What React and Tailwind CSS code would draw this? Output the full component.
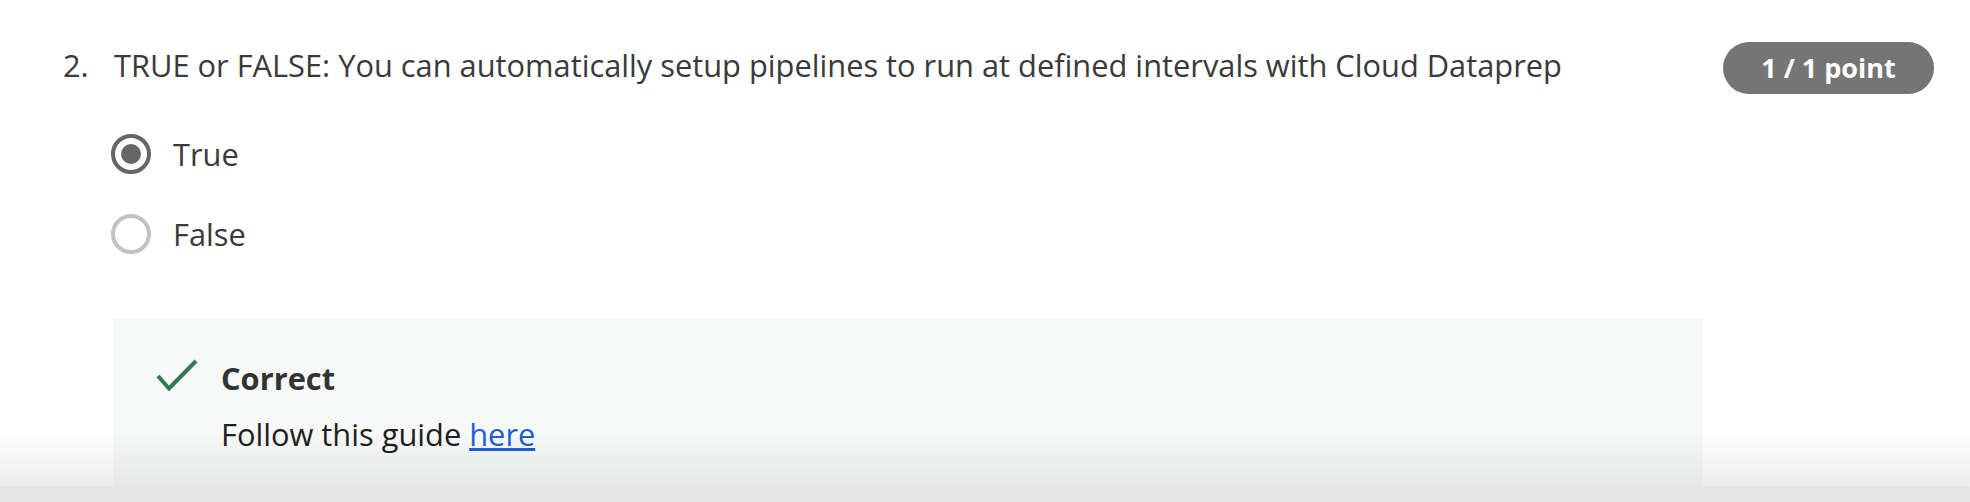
const font = { fontFamily: '"Open Sans", "Noto Sans", sans-serif' };

function Radio({ checked, label }) {
  return (
    <div className="flex items-center h-[40px] gap-[22px]">
      {checked ? (
        <span className="w-[40px] h-[40px] rounded-full border-[4px] border-[#666666] flex items-center justify-center">
          <span className="w-[20px] h-[20px] rounded-full bg-[#666666]" />
        </span>
      ) : (
        <span className="w-[40px] h-[40px] rounded-full border-[4px] border-[#c2c2c2]" />
      )}
      <span className="text-[30.8px] leading-[40px] text-[#3a3a3a]">{label}</span>
    </div>
  );
}

export default function App() {
  return (
    <div className="relative w-full h-[502px] bg-white overflow-hidden" style={font}>
      {/* question row */}
      <div className="flex items-start justify-between pt-[42px] pl-[63px] pr-[36px]">
        <div className="flex pt-[3px] text-[30.8px] leading-[40px] text-[#3a3a3a]">
          <span className="w-[51px] shrink-0">2.</span>
          <span>TRUE or FALSE: You can automatically setup pipelines to run at defined intervals with Cloud Dataprep</span>
        </div>
        <div className="h-[52px] w-[211px] rounded-full bg-[#757575] text-white font-bold text-[27px] flex items-center justify-center">
          1 / 1 point
        </div>
      </div>

      {/* options */}
      <div className="flex flex-col gap-[40px] pl-[111px] pt-[40px]">
        <Radio checked label="True" />
        <Radio label="False" />
      </div>

      {/* feedback */}
      <div className="ml-[113px] mt-[64px] w-[1590px] bg-[#f7f8f8] pt-[40px] pb-[40px] pl-[43px] flex gap-[23px]">
        <svg width="42" height="32" viewBox="0 0 42 32" className="mt-[1px] shrink-0">
          <path d="M2 17 L13 29.5 L40 2" fill="none" stroke="#2f7a50" strokeWidth="4" />
        </svg>
        <div className="flex flex-col gap-[16px] text-[30.8px] leading-[40px]">
          <span className="font-bold text-[#333333]">Correct</span>
          <span className="text-[#1f1f1f]">
            Follow this guide{" "}
            <a href="#" className="text-[#1f5fd6] underline">here</a>
          </span>
        </div>
      </div>

      {/* bottom fade */}
      <div className="pointer-events-none absolute left-0 right-0 top-[430px] h-[56px] bg-gradient-to-b from-[rgba(0,0,0,0)] to-[rgba(0,0,0,0.07)]" />
      <div className="pointer-events-none absolute left-0 right-0 top-[486px] bottom-0 bg-[#e6e6e6]" />
    </div>
  );
}
